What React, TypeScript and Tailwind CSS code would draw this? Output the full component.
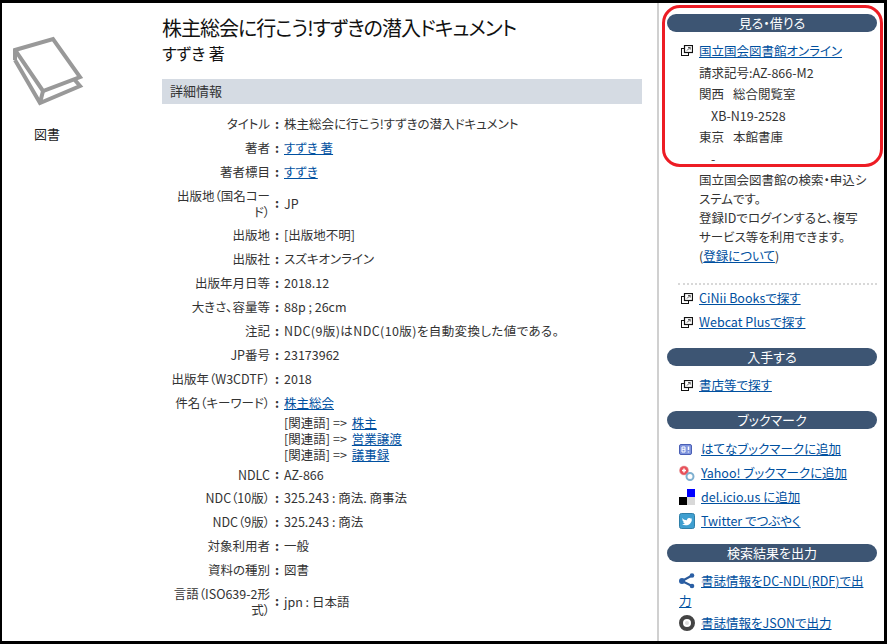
const LINK = "text-[#0050a0] underline";

function BookIcon() {
  return (
    <svg width="72" height="72" viewBox="0 0 72 72" fill="none" stroke="#999999" strokeLinejoin="miter">
      <path d="M2 24 L27 67 L67 50 L61 43" strokeWidth="4" />
      <path d="M2 14 L2 24" strokeWidth="4" />
      <path d="M2 14 L40 3 L67 41 L30 55 Z" strokeWidth="4" fill="#fff" />
      <path d="M30 55 L27 67" strokeWidth="4" />
    </svg>
  );
}

function WindowIcon() {
  return (
    <svg width="12" height="11" viewBox="0 0 12 11" fill="none" className="shrink-0">
      <rect x="0.5" y="3.5" width="7" height="7" fill="#fff" stroke="#111" />
      <rect x="3.5" y="0.5" width="8" height="7" fill="#fff" stroke="#111" strokeWidth="1.2" />
      <path d="M6 5.5 L9 2.5 M7 2.5 H9.2 V4.6" stroke="#444" strokeWidth="0.9" />
    </svg>
  );
}

function HatenaIcon() {
  return (
    <svg width="13" height="13" viewBox="0 0 13 13" className="shrink-0">
      <rect x="0.5" y="1.5" width="12" height="10" rx="1.5" fill="#7f94dd" stroke="#4a5fb5" />
      <path d="M3 4 H6 M3 6.3 H6 M3 9 H6 M3 4 V9 M6 4 V9" stroke="#fff" strokeWidth="1" fill="none" />
      <path d="M9.5 3.5 V7 M9.5 8.5 V9.5" stroke="#fff" strokeWidth="1.5" />
    </svg>
  );
}

function YahooIcon() {
  return (
    <svg width="16" height="16" viewBox="0 0 16 16" className="shrink-0">
      <circle cx="5" cy="5.5" r="4.5" fill="#e8505a" stroke="#e0a0a0" strokeWidth="0.5" />
      <path d="M3 5.5 H7 M5 3.5 V7.5" stroke="#fff" strokeWidth="1.5" />
      <circle cx="11" cy="11.5" r="3.5" fill="#fff" stroke="#7fb0d0" strokeWidth="2" />
    </svg>
  );
}

function DeliciousIcon() {
  return (
    <svg width="16" height="16" viewBox="0 0 16 16" className="shrink-0">
      <rect x="8" y="0" width="8" height="8" fill="#0000ff" />
      <rect x="0" y="8" width="8" height="8" fill="#000" />
      <rect x="8" y="8" width="8" height="8" fill="#d8d8d8" />
    </svg>
  );
}

function TwitterIcon() {
  return (
    <svg width="16" height="16" viewBox="0 0 16 16" className="shrink-0">
      <rect x="0.5" y="0.5" width="15" height="15" rx="2" fill="#3f9fd0" stroke="#2f7fa8" />
      <path d="M3 5 C4.5 6.5 6 7.2 8 7.3 C7.7 5.5 9.8 4.3 11.2 5.5 L12.8 5 L12 6.3 L13 6.2 C12.7 10 10 12.3 6.8 12.3 C5.3 12.3 4 11.9 3 11.2 C4.2 11.3 5.2 11 6 10.4 C4.8 10.2 4.2 9.6 4 8.8 H5 C3.9 8.3 3.4 7.5 3.4 6.6 L4.2 6.8 C3.5 6.2 3 5.8 3 5 Z" fill="#fff" />
    </svg>
  );
}

function ShareIcon() {
  return (
    <svg width="16" height="16" viewBox="0 0 16 16" className="shrink-0">
      <path d="M3 8 L13 2.5 M3 8 L13 13" stroke="#2a5a9a" strokeWidth="2" />
      <circle cx="3" cy="8" r="3" fill="#2a5fa5" />
      <circle cx="13" cy="2.5" r="2.3" fill="#2a5fa5" />
      <circle cx="13" cy="13" r="2.3" fill="#2a5fa5" />
    </svg>
  );
}

function JsonIcon() {
  return (
    <svg width="16" height="16" viewBox="0 0 16 16" className="shrink-0">
      <circle cx="8" cy="8" r="6" fill="none" stroke="#444" strokeWidth="4" />
      <circle cx="8" cy="8" r="2" fill="#ddd" />
    </svg>
  );
}

function Row({ label, children, tall, short }: { label: React.ReactNode; children: React.ReactNode; tall?: boolean; short?: boolean }) {
  return (
    <div className={`flex items-center ${tall ? "min-h-[39px]" : short ? "min-h-[23px]" : "min-h-[24px]"}`}>
      <div className="w-[108px] shrink-0 text-right leading-4">{label}</div>
      <div className="w-[14px] shrink-0 text-center font-bold">:</div>
      <div className="leading-4">{children}</div>
    </div>
  );
}

function SideHeading({ children }: { children: React.ReactNode }) {
  return (
    <div className="h-[18px] rounded-full bg-[#3d5573] text-center text-[13px] leading-[18px] text-white">{children}</div>
  );
}

function SideLink({ icon, children }: { icon: React.ReactNode; children: React.ReactNode }) {
  return (
    <div className="flex h-6 items-center">
      <div className="flex w-[32px] shrink-0 justify-end pr-[6px]">{icon}</div>
      <a className={LINK}>{children}</a>
    </div>
  );
}

function BookmarkLink({ icon, children }: { icon: React.ReactNode; children: React.ReactNode }) {
  return (
    <div className="flex h-6 items-center">
      <div className="ml-[12px] flex w-[22px] shrink-0 items-center">{icon}</div>
      <a className={LINK}>{children}</a>
    </div>
  );
}

function Related({ children }: { children: React.ReactNode }) {
  return (
    <div className="flex h-4 gap-[3px]">
      <span>[関連語]</span>
      <span className="mr-[2px]">=&gt;</span>
      <a className={`${LINK} inline-block h-4 leading-4`}>{children}</a>
    </div>
  );
}

export default function App() {
  return (
    <div className="relative flex h-[644px] w-[887px] overflow-hidden border-t-[3px] border-r-[3px] border-b-[3px] border-l-[2px] border-black bg-white font-['Noto_Sans_CJK_JP',sans-serif] text-[12.5px] text-[#333] [font-feature-settings:'palt']">
      {/* left type column */}
      <div className="flex w-[160px] shrink-0 flex-col">
        <div className="mt-[33px] ml-[11px]">
          <BookIcon />
        </div>
        <div className="mt-[18px] ml-[32px] text-[13px] leading-4 text-[#222]">図書</div>
      </div>

      {/* main */}
      <div className="w-[480px] shrink-0 pt-[11px]">
        <h1 className="text-[20px] leading-7 tracking-[-1px] text-[#111]">株主総会に行こう!すずきの潜入ドキュメント</h1>
        <div className="text-[16px] leading-[22px] text-[#111]">すずき 著</div>
        <div className="mt-[15px] h-[25px] bg-[#d5dbe3] pl-2 text-[13px] leading-[23px]">詳細情報</div>

        <div className="mt-[8px]">
          <Row label="タイトル">株主総会に行こう!すずきの潜入ドキュメント</Row>
          <Row label="著者"><a className={LINK}>すずき 著</a></Row>
          <Row label="著者標目"><a className={LINK}>すずき</a></Row>
          <Row tall label={<>出版地（国名コー<br />ド）</>}>JP</Row>
          <Row label="出版地">[出版地不明]</Row>
          <Row label="出版社">スズキオンライン</Row>
          <Row label="出版年月日等">2018.12</Row>
          <Row label="大きさ、容量等">88p ; 26cm</Row>
          <Row label="注記"><span className="tracking-[0.4px]">NDC(9版)はNDC(10版)を自動変換した値である。</span></Row>
          <Row label="JP番号">23173962</Row>
          <Row label="出版年（W3CDTF）">2018</Row>
          <div className="flex min-h-[24px] items-start pt-1">
            <div className="w-[108px] shrink-0 text-right leading-4">件名（キーワード）</div>
            <div className="w-[14px] shrink-0 text-center leading-4 font-bold">:</div>
            <div className="leading-4">
              <a className={`${LINK} inline-block h-4 leading-4`}>株主総会</a>
              <div className="mt-1">
                <Related>株主</Related>
                <Related>営業譲渡</Related>
                <Related>議事録</Related>
              </div>
            </div>
          </div>
          <Row short label="NDLC">AZ-866</Row>
          <Row label="NDC（10版）">325.243 : 商法. 商事法</Row>
          <Row label="NDC（9版）">325.243 : 商法</Row>
          <Row label="対象利用者">一般</Row>
          <Row label="資料の種別">図書</Row>
          <Row tall label={<>言語（ISO639-2形<br />式）</>}>jpn : 日本語</Row>
        </div>
      </div>

      {/* sidebar */}
      <div className="ml-[15px] flex w-[220px] shrink-0 flex-col border-l-2 border-[#d0d0d0] pt-[11px] pl-[8px]">
        <SideHeading>見る・借りる</SideHeading>
        <div className="mt-[8px] leading-[21.5px]">
          <div className="flex items-center">
            <div className="flex w-[32px] shrink-0 justify-end pr-[6px]"><WindowIcon /></div>
            <a className={LINK}>国立国会図書館オンライン</a>
          </div>
          <div className="pl-[32px]">
            <div>請求記号:AZ-866-M2</div>
            <div className="flex gap-[9px]"><span>関西</span><span>総合閲覧室</span></div>
            <div className="pl-3">XB-N19-2528</div>
            <div className="flex gap-[9px]"><span>東京</span><span>本館書庫</span></div>
            <div className="pl-3">-</div>
            <div className="mt-[1px] leading-[19px]">
              国立国会図書館の検索・申込システムです。<br />
              登録IDでログインすると、複写<br />
              サービス等を利用できます。<br />
              (<a className={LINK}>登録について</a>)
            </div>
          </div>
        </div>
        <div className="mt-[18px] ml-[11px] border-t-2 border-dotted border-[#d8d8d8]" />
        <div className="mt-[1px]">
          <SideLink icon={<WindowIcon />}>CiNii Booksで探す</SideLink>
          <SideLink icon={<WindowIcon />}>Webcat Plusで探す</SideLink>
        </div>
        <div className="mt-[14px]"><SideHeading>入手する</SideHeading></div>
        <div className="mt-[7px]">
          <SideLink icon={<WindowIcon />}>書店等で探す</SideLink>
        </div>
        <div className="mt-[14px]"><SideHeading>ブックマーク</SideHeading></div>
        <div className="mt-[8px]">
          <BookmarkLink icon={<HatenaIcon />}>はてなブックマークに追加</BookmarkLink>
          <BookmarkLink icon={<YahooIcon />}>Yahoo! ブックマークに追加</BookmarkLink>
          <BookmarkLink icon={<DeliciousIcon />}>del.icio.us に追加</BookmarkLink>
          <BookmarkLink icon={<TwitterIcon />}>Twitter でつぶやく</BookmarkLink>
        </div>
        <div className="mt-[11px]"><SideHeading>検索結果を出力</SideHeading></div>
        <div className="mt-[9px] ml-[12px] leading-[20px]">
          <div>
            <span className="mr-[6px] inline-block align-[-3px]"><ShareIcon /></span>
            <a className={LINK}>書誌情報をDC-NDL(RDF)で出<br />力</a>
          </div>
          <div className="mt-[2px] flex items-center">
            <span className="mr-[6px]"><JsonIcon /></span>
            <a className={LINK}>書誌情報をJSONで出力</a>
          </div>
        </div>
      </div>

      {/* red annotation around the first sidebar block */}
      <div className="pointer-events-none absolute top-[2px] left-[660px] h-[162px] w-[221px] rounded-[18px] border-[3px] border-[#ed1c24]" />
    </div>
  );
}
